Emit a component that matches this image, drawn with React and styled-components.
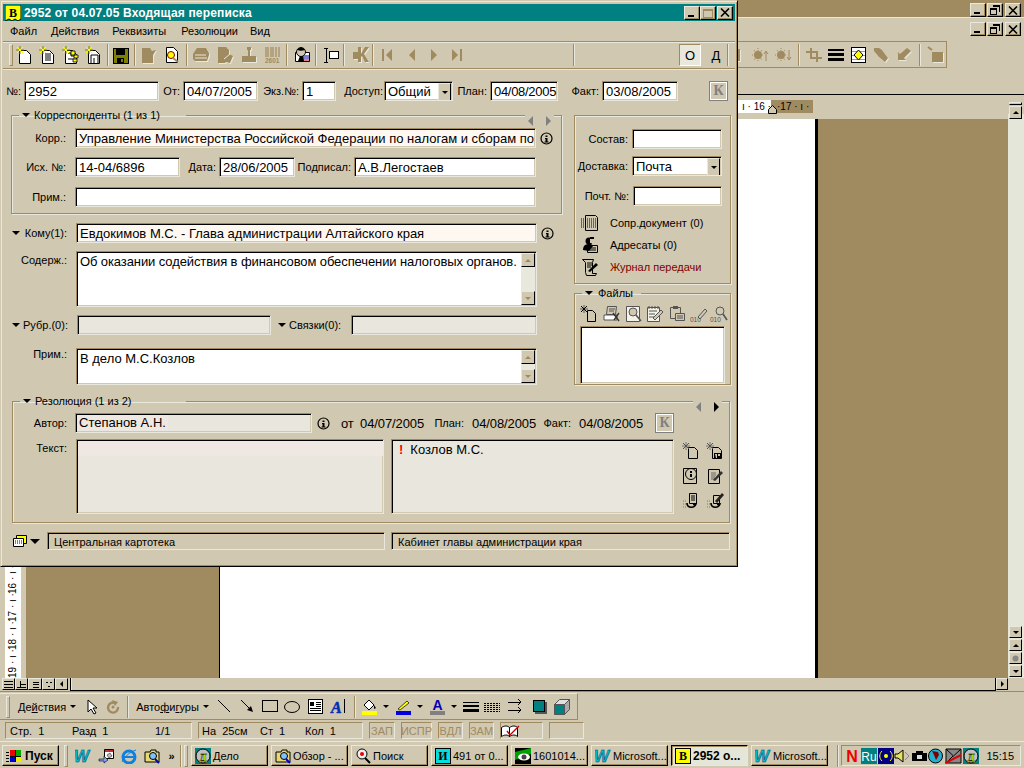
import React from 'react';
import styled, { createGlobalStyle } from 'styled-components';

const bg = '#d0c8b0';
const tan = '#a08a60';
const lite = '#e8e8dc';
const sans = '"Liberation Sans", Arial, sans-serif';

const Global = createGlobalStyle`
  html, body { margin: 0; padding: 0; background: ${bg}; }
  body { font: 11px ${sans}; color: #000; overflow: hidden; }
  * { box-sizing: border-box; }
  svg { display: block; flex: none; }
`;

const Desktop = styled.div`
  position: relative;
  width: 1024px;
  height: 768px;
  display: flex;
  flex-direction: column;
  overflow: hidden;
  background: ${bg};
`;

/* ---------- classic raised / sunken bits ---------- */
const WinBtn = styled.div`
  width: 16px;
  height: 14px;
  background: ${bg};
  border: 1px solid;
  border-color: ${lite} #000 #000 ${lite};
  box-shadow: inset -1px -1px 0 ${tan};
  display: flex;
  align-items: center;
  justify-content: center;
  margin-left: ${(p) => p.$ml || 0}px;
`;

const Raised = styled.div`
  width: ${(p) => p.$w || 13}px;
  height: ${(p) => p.$h || 12}px;
  background: ${bg};
  flex: none;
  border: 1px solid;
  border-color: ${lite} #000 #000 ${lite};
  display: flex;
  align-items: center;
  justify-content: center;
`;

const Tri = styled.i`
  display: block;
  flex: none;
  width: 0;
  height: 0;
  margin-left: ${(p) => p.$ml || 0}px;
  margin-right: ${(p) => p.$mr || 0}px;
  border-style: solid;
  border-color: transparent;
  ${(p) => {
    const s = p.$s || 4;
    const c = p.$c || '#000';
    if (p.$dir === 'left') return `border-width:${s}px ${s}px ${s}px 0;border-right-color:${c};`;
    if (p.$dir === 'right') return `border-width:${s}px 0 ${s}px ${s}px;border-left-color:${c};`;
    if (p.$dir === 'up') return `border-width:0 ${s}px ${s}px ${s}px;border-bottom-color:${c};`;
    return `border-width:${s}px ${s}px 0 ${s}px;border-top-color:${c};`;
  }}
`;

const Svg = ({ w = 18, h = 18, crisp, children }) => (
  <svg width={w} height={h} viewBox={`0 0 ${w} ${h}`} shapeRendering={crisp ? 'crispEdges' : 'auto'}>
    {children}
  </svg>
);

/* ---------- icons ---------- */
const Spark = ({ c = '#ffff00', k = '#808000' }) => (
  <g strokeWidth="1">
    <path d="M4 0v8M0 4h8" stroke={k} />
    <path d="M1 1l6 6M7 1l-6 6" stroke={c} />
  </g>
);
const Sheet = ({ x = 3, y = 4 }) => (
  <path d={`M${x + .5} ${y + .5}h7l4 4v9h-11z`} fill="#fff" stroke="#000" />
);
const Dis = ({ d }) => (
  <g>
    <path d={d} fill={lite} transform="translate(1 1)" />
    <path d={d} fill={tan} />
  </g>
);

const INew = () => <Svg><Sheet /><Spark /></Svg>;
const INewText = () => (
  <Svg><Sheet /><path d="M6 8h6M6 10h6M6 12h6M6 14h6" stroke="#000" /><Spark /></Svg>
);
const INewTree = () => (
  <Svg>
    <Sheet />
    <path d="M6 7h3v3M9 10h3M6 13h6" stroke="#000" fill="none" />
    <path d="M9 5h4v4h-4zM12 9h4v3h-4zM11 13h4v3h-4z" fill="#ffff00" stroke="#000" strokeWidth=".8" />
    <Spark />
  </Svg>
);
const INewN = () => (
  <Svg><Sheet /><path d="M6 9h7v8M6 9v8M9 12v5" stroke="#000" fill="none" /><Spark /></Svg>
);
const ISave = () => (
  <Svg crisp>
    <path d="M1 2h15v15h-15z" fill="#808000" stroke="#000" />
    <path d="M4 3h9v6h-9z" fill="#000" />
    <path d="M5 12h7v5h-7z" fill="#000" />
    <path d="M9 13h2v3h-2z" fill="#808000" />
  </Svg>
);
const IDisNote = () => <Svg><Dis d="M2 2h8l2 3 4-1-3 5v8h-11z" /></Svg>;
const IFind = () => (
  <Svg>
    <path d="M3.5 1.5h7l4 4v11h-11z" fill="#fff" stroke="#000" />
    <circle cx="8" cy="9" r="3.5" fill="#ffff00" stroke="#800000" />
    <path d="M10 12l5 4" stroke="#a08a60" strokeWidth="2" />
  </Svg>
);
const IPrint = () => (
  <Svg>
    <Dis d="M5 2h9l3 5v2l-2 6h-12l-2-2v-5z" />
    <path d="M3 9h11M3 12h12" stroke={lite} />
  </Svg>
);
const IDisEdit = () => (
  <Svg><Dis d="M2 1h8l3 3v4l4 2-3 7-4-1-1 1h-7z" /><path d="M8 13l6-5" stroke={lite} /></Svg>
);
const IStamp = () => <Svg crisp><Dis d="M7 1h4v3h-1v6h6v6h-14v-6h6v-6h-1z" /></Svg>;
const IBars = () => (
  <Svg w={18} h={18}>
    <path d="M2 1v10M4 1v10M7 1v10M9 1v10M12 1v10M15 1v10" stroke={tan} strokeWidth="1.2" />
    <text x="1" y="17" fontFamily={sans} fontSize="6.5" fontWeight="700" fill={tan}>2601</text>
  </Svg>
);
const IPerson = () => (
  <Svg>
    <path d="M2.5 6.5h14v9h-14z" fill="#fff" stroke="#000" />
    <path d="M10 10h6M10 12h6" stroke="#00a" />
    <path d="M10 14h6" stroke="#c00" />
    <circle cx="8" cy="6" r="4.5" fill="#d0c8b0" stroke="#000" />
    <path d="M4 4c2-3 6-3 8 0-3 1-5 1-8 0zM5 15l2-5h3l1 5z" fill="#000" />
  </Svg>
);
const IBeam = () => (
  <Svg crisp>
    <path d="M4 2v14M2 2h4M2 16h4" stroke="#000" fill="none" />
    <path d="M7.5 5.5h9v7h-9z" fill="#fff" stroke="#000" />
  </Svg>
);
const IDisK = () => (
  <Svg><Dis d="M7 1h3v7l4-7h4l-5 7 5 8h-4l-3-6-1 1v5h-3v-3h-5v-7h5z" /></Svg>
);
const IInfo = () => (
  <Svg w={13} h={13}>
    <circle cx="6.5" cy="6.5" r="5.5" fill="none" stroke="#000" strokeWidth="1.2" />
    <path d="M5.5 3.5h2v1.5h-2zM5 6h2.5v3.5h1v1h-4v-1h1v-2.5h-.5z" fill="#000" />
  </Svg>
);
const ILogoB = ({ s = 16 }) => (
  <Svg w={s} h={s}>
    <path d={`M0 0H${s}V${s - 2}L${s - 3} ${s}L${s - 6} ${s - 2}L${s - 9} ${s}L${s - 12} ${s - 2}L0 ${s}z`} fill="#ffff00" stroke="#000" />
    <text x={s / 2} y={s - 4} textAnchor="middle" fontFamily='"Liberation Serif", serif' fontWeight="700" fontSize={s - 4} fill="#000">В</text>
  </Svg>
);

const IDocList = () => (
  <Svg>
    <path d="M4.5 1.5h10l2 2v13h-12z" fill={bg} stroke="#000" />
    <path d="M6 5h9M6 7h9M6 9h9M6 11h9M6 13h9M0 5h3M0 7h3M0 9h3M0 11h3M0 13h3" stroke="#000" strokeDasharray="1 1" />
  </Svg>
);
const IPeople = () => (
  <Svg>
    <path d="M6.5 9.5h10v7h-10z" fill={bg} stroke="#000" />
    <path d="M8 12h7M8 14h7" stroke="#000" />
    <circle cx="8" cy="5" r="3.5" fill="#000" />
    <path d="M2 14c0-4 2-6 6-6s4 2 4 2l-4 5z" fill="#000" />
    <path d="M9 2h4v5h-4z" fill={bg} />
    <path d="M9 1h4v2h-4z" fill="#000" />
  </Svg>
);
const IScroll = () => (
  <Svg>
    <path d="M1.5 1.5h11l-1 3v11h4l-1 2h-9l-1-3v-10z" fill={bg} stroke="#000" />
    <path d="M6 5h5M6 7h5M6 9h4" stroke="#000" />
    <path d="M7 13l8-8 2 2-8 7z" fill="#000" />
  </Svg>
);
const IFNew = () => (
  <Svg>
    <path d="M7.5 5.5h5l3 3v8h-8z" fill={bg} stroke="#000" />
    <Spark c="#000" k="#555" />
  </Svg>
);
const IFPrint = () => (
  <Svg>
    <path d="M4.5 1.5h9l-1 8h-9z" fill={bg} stroke="#555" />
    <path d="M6 4h6M6 6h5" stroke="#555" />
    <path d="M1 10h13v5h-13z" fill="#fff" stroke="#555" />
    <path d="M10 8l6 8M16 8l-5 7" stroke="#333" strokeWidth="1.3" />
  </Svg>
);
const IFView = () => (
  <Svg>
    <path d="M1.5 1.5h13v15h-13z" fill="#f4f2e8" stroke="#555" />
    <circle cx="8" cy="7" r="4" fill={bg} stroke="#555" />
    <path d="M11 10l5 6" stroke="#555" strokeWidth="1.6" />
  </Svg>
);
const IFEdit = () => (
  <Svg>
    <path d="M1.5 2.5h12v14h-12z" fill="#f4f2e8" stroke="#555" />
    <path d="M3 6h8M3 9h6M3 12h5M3 1v3M6 1v3M9 1v3M12 1v3" stroke="#555" />
    <path d="M7 13l8-8 2 2-8 8z" fill={bg} stroke="#555" />
  </Svg>
);
const IFClip = () => (
  <Svg>
    <path d="M2.5 2.5h10v11h-10z" fill={bg} stroke="#555" />
    <path d="M5 1h5v3h-5z" fill="#555" />
    <path d="M7.5 8.5h9v7h-9z" fill={bg} stroke="#555" />
    <path d="M9 11h6M9 13h6" stroke="#555" />
  </Svg>
);
const IFBinEdit = () => (
  <Svg>
    <text x="0" y="17" fontFamily={sans} fontSize="6.5" fill="#555">010</text>
    <path d="M8 12l7-8 2 2-7 8z" fill={bg} stroke="#555" />
  </Svg>
);
const IFBinView = () => (
  <Svg>
    <text x="0" y="17" fontFamily={sans} fontSize="6.5" fill="#555">010</text>
    <circle cx="10" cy="6" r="4" fill={bg} stroke="#555" />
    <path d="M13 9l4 6" stroke="#555" strokeWidth="1.6" />
  </Svg>
);
const IRNew = () => (
  <Svg>
    <path d="M6.5 5.5h6l3 3v8h-9z" fill={bg} stroke="#000" />
    <Spark c="#555" k="#777" />
  </Svg>
);
const IRNewPr = () => (
  <Svg>
    <path d="M6.5 5.5h6l3 3v8h-9z" fill={bg} stroke="#000" />
    <path d="M8 11h7v5h-7z" fill="#000" />
    <path d="M9 12h2v4h-1zM12 12h2v2h-2z" fill={bg} />
    <Spark c="#555" k="#777" />
  </Svg>
);
const IRInfo = () => (
  <Svg>
    <path d="M1.5 1.5h13v15h-13z" fill={bg} stroke="#000" />
    <circle cx="9" cy="7" r="5.5" fill={bg} stroke="#000" />
    <path d="M8 4h2v2h-2zM8 7h2v3h-2z" fill="#000" />
  </Svg>
);
const IREdit = () => (
  <Svg>
    <path d="M2.5 2.5h11v14h-11z" fill={bg} stroke="#000" />
    <path d="M5 6h5M5 8h5M5 10h4M5 12h4" stroke="#666" />
    <path d="M7 13l8-9 2 2-8 8z" fill="#333" />
  </Svg>
);
const IRSend = () => (
  <Svg>
    <path d="M7.5 1.5h7v10h-7z" fill={bg} stroke="#000" />
    <path d="M9 4h4M9 6h4M9 8h4" stroke="#000" />
    <path d="M1 9h3M1 12h3M1 15h3" stroke="#777" strokeDasharray="1 1" />
    <path d="M5 11c0 5 7 6 9 1l-3 .5" fill="none" stroke="#000" strokeWidth="1.6" />
  </Svg>
);
const IRSendEdit = () => (
  <Svg>
    <path d="M7.5 3.5h6v8h-6z" fill={bg} stroke="#000" />
    <path d="M9 9l7-8 2 2-7 8z" fill="#222" />
    <path d="M1 9h3M1 12h3M1 15h3" stroke="#777" strokeDasharray="1 1" />
    <path d="M5 11c0 5 7 6 9 1l-3 .5" fill="none" stroke="#000" strokeWidth="1.6" />
  </Svg>
);
const ICards = () => (
  <Svg w={14} h={14}>
    <path d="M3.5 1.5h10v8h-10z" fill="#ffff00" stroke="#000" />
    <path d="M.5 4.5h10v8h-10z" fill="#fff" stroke="#000" />
    <path d="M2 7h7M2 9h7" stroke="#000" strokeDasharray="1 1" />
  </Svg>
);

/* ---------- dialog window ---------- */
const Dialog = styled.div`
  position: absolute;
  left: 0;
  top: 0;
  width: 738px;
  height: 567px;
  background: ${bg};
  border: 1px solid;
  border-color: ${bg} #000 #000 ${bg};
  box-shadow: inset 1px 1px 0 ${lite}, inset -1px -1px 0 ${tan};
  padding: 3px 2px 0;
  display: flex;
  flex-direction: column;
`;

const TitleBar = styled.div`
  height: 17px;
  background: #008080;
  display: flex;
  align-items: center;
  padding: 0 2px 0 2px;
  flex: none;
`;

const TitleText = styled.span`
  color: #fff;
  font-weight: 700;
  font-size: 12px;
  letter-spacing: 0.16px;
  margin-left: 3px;
  white-space: nowrap;
`;

const TitleBtns = styled.div`
  margin-left: auto;
  display: flex;
`;

const Menu = styled.div`
  height: 20px;
  display: flex;
  align-items: center;
  flex: none;
  padding-left: ${(p) => p.$pl || 7}px;
`;

const MenuItem = styled.span`
  font-size: 11px;
  margin-right: ${(p) => p.$mr}px;
  white-space: nowrap;
`;

const Toolbar = styled.div`
  height: 28px;
  flex: none;
  display: flex;
  align-items: center;
  border-top: 1px solid ${tan};
  border-bottom: 1px solid ${tan};
  box-shadow: inset 0 1px 0 ${lite}, 0 1px 0 ${lite};
  padding: 0 6px 0 6px;
`;

const Handle = styled.div`
  width: 4px;
  height: 22px;
  flex: none;
  margin-right: ${(p) => p.$mr ?? 2}px;
  border: 1px solid;
  border-color: ${lite} ${tan} ${tan} ${lite};
`;

const Slot = styled.div`
  width: ${(p) => p.$w || 23}px;
  height: 20px;
  flex: none;
  display: flex;
  align-items: center;
  justify-content: center;
`;

const Sep = styled.div`
  width: 2px;
  height: 22px;
  flex: none;
  border-left: 1px solid ${tan};
  border-right: 1px solid ${lite};
  margin-left: ${(p) => p.$ml ?? 2}px;
  margin-right: ${(p) => p.$mr ?? 1}px;
`;

const Spacer = styled.div`
  flex: 1;
`;

const Toggle = styled.div`
  width: 22px;
  height: 22px;
  flex: none;
  font: 13px ${sans};
  display: flex;
  align-items: center;
  justify-content: center;
  margin-left: ${(p) => p.$ml || 0}px;
  ${(p) => p.$on && `
    background: ${lite};
    border: 1px solid;
    border-color: ${tan} #fff #fff ${tan};
  `}
`;

const Body = styled.div`
  flex: 1;
  display: flex;
  flex-direction: column;
  padding-top: 12px;
  margin-left: -3px;
`;

const Row = styled.div`
  display: flex;
  align-items: ${(p) => p.$align || 'center'};
  flex: none;
  margin-top: ${(p) => p.$mt || 0}px;
  padding-left: ${(p) => p.$pl || 0}px;
`;

const Label = styled.span`
  display: block;
  flex: none;
  width: ${(p) => (p.$w ? `${p.$w}px` : 'auto')};
  text-align: ${(p) => p.$ta || 'right'};
  margin-left: ${(p) => p.$ml || 0}px;
  margin-right: ${(p) => p.$mr ?? 3}px;
  padding-top: ${(p) => p.$pt || 0}px;
  font-size: 11px;
  white-space: nowrap;
  color: ${(p) => p.$c || '#000'};
`;

const Field = styled.div`
  width: ${(p) => p.$w}px;
  height: ${(p) => p.$h || 20}px;
  flex: none;
  margin-left: ${(p) => p.$ml || 0}px;
  background: ${(p) => p.$bg || '#fff'};
  border: 1px solid;
  border-color: ${tan} ${lite} ${lite} ${tan};
  box-shadow: inset 1px 1px 0 #000, inset -1px -1px 0 ${bg};
  padding: 2px 2px 2px 3px;
  font-size: ${(p) => p.$fs || 13}px;
  line-height: 15px;
  white-space: nowrap;
  overflow: hidden;
  letter-spacing: ${(p) => p.$ls || 0}px;
`;

const FieldFlex = styled(Field)`
  display: flex;
  padding-right: 1px;
`;

const FieldText = styled.div`
  flex: 1;
  overflow: hidden;
`;

const ScrollCol = styled.div`
  width: 14px;
  flex: none;
  display: flex;
  flex-direction: column;
  background: ${lite};
  justify-content: space-between;
  margin: -1px 0;
`;

const Tinted = styled.div`
  height: 15px;
  display: ${(p) => (p.$inline ? 'inline-block' : 'block')};
  margin: -1px -2px 0 -2px;
  padding: 0 2px;
  background: #efe8e2;
  overflow: hidden;
`;

const SelectBtn = styled(Raised)`
  margin: -1px 0;
`;

const Group = styled.fieldset`
  margin: ${(p) => p.$m || 0};
  min-width: 0;
  padding: ${(p) => p.$p || 0};
  width: ${(p) => p.$w}px;
  position: relative;
  border: 1px solid ${tan};
  box-shadow: 1px 1px 0 ${lite}, inset 1px 1px 0 ${lite};
`;

const Legend = styled.legend`
  display: flex;
  align-items: center;
  height: 14px;
  margin-left: ${(p) => p.$ml || 7}px;
  padding: 0 ${(p) => p.$pr || 4}px 0 3px;
  font-size: 11px;
  white-space: nowrap;
`;

const LegendNav = styled.div`
  position: absolute;
  top: -8px;
  right: 7px;
  height: 14px;
  display: flex;
  align-items: center;
  gap: 13px;
  padding: 0 3px;
  background: ${bg};
`;

const Columns = styled.div`
  display: flex;
  margin-top: 7px;
  padding-left: 11px;
  flex: none;
  height: 280px;
`;

const LeftCol = styled.div`
  width: 551px;
  flex: none;
`;

const RightCol = styled.div`
  width: 157px;
  flex: none;
  margin-left: 12px;
  padding-top: 7px;
`;

const Panel = styled.div`
  height: 169px;
  border: 1px solid ${tan};
  box-shadow: 1px 1px 0 ${lite}, inset 1px 1px 0 ${lite};
  padding-top: 13px;
`;

const LinkRow = styled.div`
  display: flex;
  align-items: center;
  height: 22px;
  margin-top: ${(p) => p.$mt || 0}px;
  padding-left: 6px;
  gap: 11px;
  font-size: 11px;
  color: ${(p) => p.$c || '#000'};
  white-space: nowrap;
`;

const FileTools = styled.div`
  display: flex;
  height: 18px;
  margin: 5px 0 3px 5px;
`;

const ToolCell = styled.div`
  width: ${(p) => p.$w || 22}px;
  flex: none;
`;

const KBtn = styled.div`
  width: 19px;
  height: 20px;
  flex: none;
  margin-left: ${(p) => p.$ml || 0}px;
  background: ${bg};
  border: 1px solid #808080;
  box-shadow: inset 1px 1px 0 #fff, inset -1px -1px 0 #fff;
  color: #808080;
  font: 700 14px "Liberation Serif", serif;
  display: flex;
  align-items: center;
  justify-content: center;
`;

const DateText = styled.span`
  display: block;
  flex: none;
  width: ${(p) => p.$w}px;
  margin-left: ${(p) => p.$ml || 0}px;
  font-size: 13px;
  letter-spacing: -0.1px;
  white-space: nowrap;
`;

const ResGrid = styled.div`
  display: grid;
  height: 75px;
  grid-template-columns: 24px 24px;
  grid-auto-rows: 25px;
  padding-top: 3px;
  margin-left: 8px;
`;

const Bang = styled.span`
  color: #f00;
  font-weight: 700;
  margin: 0 7px 0 4px;
`;

/* ---------- word window behind ---------- */
const Word = styled.div`
  flex: 1;
  display: flex;
  flex-direction: column;
  min-height: 0;
`;

const WTitle = styled.div`
  height: 18px;
  flex: none;
  background: ${tan};
  border-bottom: 1px solid ${lite};
  display: flex;
  justify-content: flex-end;
  align-items: flex-start;
  padding: 3px 3px 0 0;
`;

const WMenu = styled.div`
  height: 23px;
  flex: none;
  display: flex;
  justify-content: flex-end;
  align-items: flex-start;
  padding: 4px 3px 0 0;
`;

const WTools = styled.div`
  width: 947px;
  height: 27px;
  flex: none;
  display: flex;
  align-items: center;
  justify-content: flex-end;
  border: 1px solid ${tan};
  border-left: none;
`;

const WGap = styled.div`
  height: 27px;
  flex: none;
  border-bottom: 1px solid #000;
`;

const WMain = styled.div`
  flex: 1;
  min-height: 0;
  display: flex;
`;

const WDocCol = styled.div`
  flex: 1;
  display: flex;
  flex-direction: column;
`;

const RulerRow = styled.div`
  height: 24px;
  flex: none;
  display: flex;
  padding: 5px 0 6px 738px;
  position: relative;
  font-size: 10px;
  line-height: 13px;
`;

const RulerPart = styled.div`
  width: ${(p) => p.$w}px;
  background: ${(p) => p.$bg};
  white-space: pre;
  padding-left: ${(p) => p.$pl || 0}px;
`;

const RulerMark = styled.div`
  position: absolute;
  left: 768px;
  top: 10px;
`;

const DocRow = styled.div`
  flex: 1;
  min-height: 0;
  display: flex;
`;

const VRulerZone = styled.div`
  width: 26px;
  flex: none;
  padding: 0 5px;
  display: flex;
`;

const VRuler = styled.div`
  flex: 1;
  background: #fff;
  display: flex;
  flex-direction: column;
  justify-content: flex-end;
  align-items: center;
`;

const VRulerNum = styled.div`
  height: 28px;
  writing-mode: vertical-rl;
  transform: rotate(180deg);
  font-size: 10px;
  line-height: 16px;
  white-space: pre;
`;

const TanFill = styled.div`
  background: ${tan};
  flex: ${(p) => (p.$w ? 'none' : 1)};
  width: ${(p) => (p.$w ? `${p.$w}px` : 'auto')};
`;

const Page = styled.div`
  width: 599px;
  flex: none;
  background: #fff;
  border-left: 1px solid #000;
  border-right: 3px solid #000;
`;

const VScroll = styled.div`
  width: 16px;
  flex: none;
  display: flex;
  flex-direction: column;
  align-items: center;
  padding: 7px 2px 1px 1px;
  gap: 1px;
  background: linear-gradient(${bg}, ${bg}) top / 100% 19px no-repeat, #e4e6da;
`;

const VScrollGap = styled.div`
  flex: 1;
`;

const HScroll = styled.div`
  height: 13px;
  flex: none;
  display: flex;
  padding-left: 2px;
  gap: 0;
`;

const HTrack = styled.div`
  flex: 1;
  margin-left: 2px;
  border-left: 1px solid #000;
  border-bottom: 1px solid #000;
  border-right: 1px solid #000;
  box-shadow: inset 1px 0 0 ${lite};
`;

const Corner = styled.div`
  width: 16px;
  flex: none;
`;

const DrawBar = styled.div`
  height: 27px;
  width: 578px;
  flex: none;
  margin-top: 1px;
  display: flex;
  align-items: center;
  border-top: 1px solid ${lite};
  border-right: 1px solid ${tan};
  border-bottom: 1px solid ${tan};
  padding-left: 6px;
  position: relative;
`;

const BarWrap = styled.div`
  flex: none;
  border-top: 1px solid ${tan};
`;

const DrawText = styled.span`
  display: flex;
  align-items: center;
  gap: 4px;
  font-size: 11px;
  margin-left: ${(p) => p.$ml || 0}px;
  margin-right: ${(p) => p.$mr || 0}px;
  white-space: nowrap;
`;

const Under = styled.u`
  text-underline-offset: 1px;
`;

const StatusBar = styled.div`
  height: 22px;
  flex: none;
  display: flex;
  align-items: center;
  padding-left: 5px;
  gap: 6px;
  border-bottom: 1px solid ${lite};
`;

const StatusCell = styled.div`
  width: ${(p) => p.$w}px;
  height: 17px;
  flex: none;
  display: flex;
  align-items: center;
  justify-content: ${(p) => (p.$center ? 'center' : 'flex-start')};
  border: 1px solid;
  border-color: ${tan} ${lite} ${lite} ${tan};
  font-size: 11px;
  color: ${(p) => (p.$off ? tan : '#000')};
  white-space: nowrap;
`;

const StatusItem = styled.span`
  width: ${(p) => p.$w}px;
  flex: none;
  padding-left: ${(p) => p.$pl || 0}px;
  white-space: pre;
`;

/* ---------- taskbar ---------- */
const Taskbar = styled.div`
  height: 26px;
  flex: none;
  display: flex;
  align-items: center;
  padding: 1px 0 0 2px;
`;

const Start = styled.div`
  width: 57px;
  height: 21px;
  flex: none;
  display: flex;
  align-items: center;
  gap: 3px;
  padding-left: 3px;
  font: 700 12px ${sans};
  border: 1px solid;
  border-color: ${lite} #000 #000 ${lite};
  box-shadow: inset -1px -1px 0 ${tan};
`;

const QuickBar = styled.div`
  display: flex;
  align-items: center;
  margin-left: 5px;
  height: 22px;
`;

const Quick = styled.div`
  width: ${(p) => p.$w || 23}px;
  flex: none;
  display: flex;
  justify-content: center;
  font-size: 11px;
  font-weight: 700;
`;

const Task = styled.div`
  width: 77px;
  height: 21px;
  flex: none;
  margin-right: 3px;
  display: flex;
  align-items: center;
  gap: 2px;
  padding-left: 3px;
  font-size: 11px;
  white-space: nowrap;
  border: 1px solid;
  border-color: ${lite} #000 #000 ${lite};
  box-shadow: inset -1px -1px 0 ${tan};
  ${(p) => p.$on && `
    background: #e4e6da;
    font-size: 12px;
    font-weight: 700;
    border-color: #000 ${lite} ${lite} #000;
    box-shadow: inset 1px 1px 0 ${tan};
  `}
`;

const Tray = styled.div`
  width: 180px;
  height: 21px;
  flex: none;
  margin-left: 1px;
  display: flex;
  align-items: center;
  padding-left: 3px;
  border: 1px solid;
  border-color: ${tan} ${lite} ${lite} ${tan};
`;

const Clock = styled.span`
  margin-left: auto;
  margin-right: 6px;
  font-size: 11px;
`;

const Min = () => <Svg w={8} h={8} crisp><path d="M0 6h6v2h-6z" fill="#000" /></Svg>;
const Restore = () => (
  <Svg w={10} h={10} crisp>
    <path d="M3 .5h6.5v6M.5 3.5h6v6h-6z" fill={bg} stroke="#000" />
    <path d="M3 1h7M0 4h7" stroke="#000" />
  </Svg>
);
const Max = ({ c = tan }) => (
  <Svg w={10} h={10} crisp><path d="M.5 1.5h9v8h-9zM0 2h10" fill="none" stroke={c} /></Svg>
);
const Close = () => (
  <Svg w={10} h={9}>
    <path d="M1 .5l8 8M9 .5l-8 8" stroke="#000" strokeWidth="1.6" />
  </Svg>
);

const WordW = ({ s = 16 }) => (
  <Svg w={s} h={s}>
    <text x="-1" y={s - 2} fontFamily={sans} fontWeight="700" fontStyle="italic" fontSize={s} fill="#00c0c0" stroke="#004080" strokeWidth=".5">W</text>
  </Svg>
);

const StartLogo = () => (
  <Svg w={16} h={14} crisp>
    <path d="M4 1h5v6h-5z" fill="#e00" />
    <path d="M9 1h6v6h-6z" fill="#0a0" />
    <path d="M4 7h5v6h-5z" fill="#00c" />
    <path d="M9 7h6v6h-6z" fill="#ee0" />
    <path d="M0 3h3M0 6h3M0 9h3M0 12h3" stroke="#000" />
    <path d="M9 1v12M4 7h11" stroke="#000" />
  </Svg>
);

const Delo = ({ s = 16 }) => (
  <Svg w={s} h={s}>
    <rect width={s} height={s} fill="#008080" />
    <circle cx={s / 2} cy={s / 2} r={s / 2 - 1} fill="#c0c0c0" stroke="#000" />
    <text x={s / 2} y={s - 3} textAnchor="middle" fontFamily='"Liberation Serif", serif' fontWeight="700" fontSize={s - 5} fill="#ffff00" stroke="#000" strokeWidth=".4">Д</text>
  </Svg>
);

const Explorer = () => (
  <Svg w={16} h={16}>
    <path d="M1 4h5l1-2h5v2h3v10h-14z" fill="#e8d870" stroke="#000" />
    <circle cx="9" cy="8" r="3.5" fill="#80c0ff" stroke="#000" />
    <path d="M11 11l4 4" stroke="#0000c0" strokeWidth="2" />
  </Svg>
);

const Search = () => (
  <Svg w={16} h={16}>
    <circle cx="7" cy="6" r="5" fill="#f0f0f0" stroke="#000" />
    <circle cx="7" cy="6" r="2" fill="#e00" />
    <path d="M10 10l5 5" stroke="#000" strokeWidth="2" />
  </Svg>
);

const LetterBox = ({ ch, c }) => (
  <Svg w={16} h={16}>
    <rect x=".5" y=".5" width="15" height="15" fill={c} stroke="#000" />
    <text x="8" y="12" textAnchor="middle" fontFamily='"Liberation Serif", serif' fontWeight="700" fontSize="12">{ch}</text>
  </Svg>
);

const Eye = () => (
  <Svg w={16} h={16}>
    <rect width="16" height="16" fill="#000" />
    <path d="M0 4l16-4v6l-16 6z" fill="#00a000" />
    <ellipse cx="9" cy="9" rx="6" ry="3.5" fill="#fff" />
    <circle cx="9" cy="9" r="2.5" fill="#444" />
  </Svg>
);

const IE = () => (
  <Svg w={16} h={16}>
    <ellipse cx="8" cy="9" rx="6" ry="6" fill="none" stroke="#1080e0" strokeWidth="3" />
    <path d="M3 9h10" stroke="#1080e0" strokeWidth="2" />
    <path d="M1 14c3-6 8-10 14-12" stroke="#1080e0" fill="none" />
  </Svg>
);

const Outlook = () => (
  <Svg w={16} h={16}>
    <path d="M6.5 1.5h9v9h-9z" fill="#fff" stroke="#000" />
    <path d="M7 2h8v2h-8z" fill="#c03030" />
    <path d="M9 7l3-2 2 3-3 2z" fill="#c0c0c0" stroke="#000" strokeWidth=".5" />
    <path d="M1 11h5v-3l4 4-4 3v-2h-5z" fill="#80a0f0" stroke="#000" strokeWidth=".6" />
  </Svg>
);

const Dots = ({ w = 14 }) => (
  <Svg w={w} h={14} crisp>
    <path d={`M0 3h${w}M0 5h${w}M0 7h${w}M0 9h${w}M0 11h${w}`} stroke="#000" strokeDasharray="2 1" />
  </Svg>
);

const FillSwatch = ({ c, children }) => (
  <Svg w={17} h={18}>
    {children}
    <path d="M1 13h15v4h-15z" fill={c} />
  </Svg>
);

const toolIcons = [INew, INewText, INewTree, INewN];

export default function App() {
  return (
    <Desktop>
      <Global />
      <Word>
        <WTitle>
          <WinBtn><Min /></WinBtn>
          <WinBtn $ml={1}><Restore /></WinBtn>
          <WinBtn $ml={2}><Close /></WinBtn>
        </WTitle>
        <WMenu>
          <WinBtn><Min /></WinBtn>
          <WinBtn $ml={1}><Restore /></WinBtn>
          <WinBtn $ml={2}><Close /></WinBtn>
        </WMenu>
        <WTools>
          <Slot $w={14}><Svg w={10} h={16}><Dis d="M0 2h4v12h-4z" /></Svg></Slot>
          <Slot $w={26}><Svg w={18} h={16}><circle cx="6" cy="8" r="4" fill={tan} /><path d="M6 1v14M0 8h12M2 3l8 10M10 3l-8 10" stroke={tan} strokeDasharray="1 1" /><path d="M14 14v-9M12 7l2-3 2 3" stroke={tan} fill="none" /></Svg></Slot>
          <Slot $w={20}><Svg w={18} h={16}><circle cx="6" cy="8" r="4" fill={tan} /><path d="M6 1v14M0 8h12M2 3l8 10M10 3l-8 10" stroke={tan} strokeDasharray="1 1" /><path d="M14 3v9M12 10l2 3 2-3" stroke={tan} fill="none" /></Svg></Slot>
          <Sep $ml={4} $mr={4} />
          <Slot $w={20}><Svg w={16} h={16} crisp><path d="M5 1v10h11M0 5h11v10" stroke={tan} strokeWidth="2" fill="none" /></Svg></Slot>
          <Slot $w={23}><Svg w={16} h={12} crisp><path d="M0 0h16v2h-16zM0 4h16v3h-16zM0 9h16v3h-16z" fill="#000" /></Svg></Slot>
          <Slot $w={22}><Svg w={15} h={16} crisp><path d="M.5 .5h14v15h-14z" fill="#fff" stroke="#000" /><path d="M1 4h13M1 8h13M1 12h13" stroke="#999" /><path d="M7.5 3l4.5 5-4.5 5-4.5-5z" fill="#ffff00" stroke="#000" shapeRendering="auto" /></Svg></Slot>
          <Slot $w={24}><Svg w={18} h={16}><Dis d="M2 1h5l3 2 6 8-3 4-6-5-5-6z" /></Svg></Slot>
          <Slot $w={24}><Svg w={16} h={16}><Dis d="M10 1l4 3-7 7 2 2h-8v-8l2 2z" /></Svg></Slot>
          <Sep $ml={2} $mr={3} />
          <Slot $w={22}><Svg w={17} h={17}><path d="M1 1l4 3" stroke={tan} strokeWidth="2" /><Dis d="M5 6l11 0 0 10-11 0z" /></Svg></Slot>
        </WTools>
        <WGap />
        <WMain>
          <WDocCol>
            <RulerRow>
              <RulerPart $w={33} $bg="#fff" $pl={4}>{'ı · 16 ·'}</RulerPart>
              <RulerPart $w={42} $bg={tan} $pl={6}>{'·17 · ı ·'}</RulerPart>
              <RulerMark>
                <Svg w={9} h={9}><path d="M4.5 .5l4 4v4h-8v-4z" fill={bg} stroke="#000" /></Svg>
              </RulerMark>
            </RulerRow>
            <DocRow>
              <VRulerZone>
                <VRuler>
                  <VRulerNum>{'16 · ı ·'}</VRulerNum>
                  <VRulerNum>{'17 · ı ·'}</VRulerNum>
                  <VRulerNum>{'18 · ı ·'}</VRulerNum>
                  <VRulerNum>{'19 · ı ·'}</VRulerNum>
                </VRuler>
              </VRulerZone>
              <TanFill $w={193} />
              <Page />
              <TanFill />
            </DocRow>
          </WDocCol>
          <VScroll>
            <Raised $w={13} $h={3} />
            <Raised $w={13} $h={13}><Tri $dir="up" $s={3} /></Raised>
            <VScrollGap />
            <Raised $w={13} $h={12}><Tri $dir="down" $s={3} /></Raised>
            <Raised $w={13} $h={12}><Tri $dir="up" $s={3} /></Raised>
            <Raised $w={13} $h={12}><Svg w={7} h={7}><circle cx="3.5" cy="3.5" r="3" fill="#888" /></Svg></Raised>
            <Raised $w={13} $h={12}><Tri $dir="down" $s={3} /></Raised>
          </VScroll>
        </WMain>
        <HScroll>
          <Raised><Svg w={9} h={7} crisp><path d="M0 0h9M0 3h9M0 6h9" stroke="#000" /></Svg></Raised>
          <Raised><Svg w={9} h={7} crisp><path d="M3 0v7M3 3h6M0 6h9" stroke="#000" /></Svg></Raised>
          <Raised $w={14}><Svg w={8} h={7} crisp><path d="M2 1h6M2 3h6M2 6h6" stroke="#000" /></Svg></Raised>
          <Raised><Svg w={8} h={7} crisp><path d="M1 1h2M5 1h2M3 5h2" stroke="#000" /></Svg></Raised>
          <Raised><Tri $dir="left" $s={3} /></Raised>
          <HTrack />
          <Raised $w={12}><Tri $dir="right" $s={3} /></Raised>
          <Corner />
        </HScroll>
        <BarWrap>
          <DrawBar>
            <Handle $mr={8} />
            <DrawText $mr={8}><span>Де<Under>й</Under>ствия</span><Tri $dir="down" $s={3} /></DrawText>
            <Slot $w={17}><Svg w={12} h={16}><path d="M1 1v12l3-3 3 5 2-1-3-5h4z" fill="#fff" stroke="#000" /></Svg></Slot>
            <Slot $w={24}><Svg w={16} h={16}><path d="M13 8a5 5 0 1 1-3-4" fill="none" stroke={tan} strokeWidth="2.4" /><path d="M7 1l6 2-3 4z" fill={tan} /><circle cx="8" cy="8" r="1.5" fill={tan} /></Svg></Slot>
            <Sep $ml={2} $mr={6} />
            <DrawText $ml={1} $mr={5}><span>Авто<Under>ф</Under>и<Under>г</Under>уры</span><Tri $dir="down" $s={3} /></DrawText>
            <Slot $w={22}><Svg w={15} h={15}><path d="M1 1l12 12" stroke="#000" /></Svg></Slot>
            <Slot $w={23}><Svg w={15} h={15}><path d="M1 1l9 9" stroke="#000" /><path d="M13 13l-6-2 4-4z" fill="#000" /></Svg></Slot>
            <Slot $w={22}><Svg w={16} h={13} crisp><path d="M.5 .5h15v11h-15z" fill={bg} stroke="#000" /></Svg></Slot>
            <Slot $w={23}><Svg w={16} h={12}><ellipse cx="8" cy="6" rx="7.5" ry="5.5" fill={bg} stroke="#000" /></Svg></Slot>
            <Slot $w={23}><Svg w={16} h={16} crisp><path d="M1.5 .5h14v14h-14z" fill="#fff" stroke="#000" /><path d="M3 3h4v4h-4z" fill="#000" /><path d="M9 3h5M9 5h5M9 7h5M3 9h11M3 11h11" stroke="#000" /></Svg></Slot>
            <Slot $w={23}><Svg w={16} h={18}><text x="1" y="15" fontFamily='"Liberation Serif", serif' fontWeight="700" fontStyle="italic" fontSize="16" fill="#0030b0" stroke="#0030b0" strokeWidth=".5">A</text><path d="M14.5 1v14" stroke="#000" /></Svg></Slot>
            <Sep $ml={4} $mr={5} />
            <Slot $w={18}><FillSwatch c="#ffff00"><path d="M3 7l5-5 5 5-5 5z" fill="#fff" stroke="#000" /><path d="M13 7l2 3-2 1z" fill="#000" /></FillSwatch></Slot>
            <Tri $dir="down" $s={3} $ml={4} $mr={6} />
            <Slot $w={18}><FillSwatch c="#0000e0"><path d="M3 11l9-8 2 2-9 7z" fill="#ffff00" stroke="#000" strokeWidth=".7" /></FillSwatch></Slot>
            <Tri $dir="down" $s={3} $ml={4} $mr={6} />
            <Slot $w={18}><FillSwatch c="#808080"><text x="8.5" y="12" textAnchor="middle" fontFamily={sans} fontWeight="700" fontSize="14" fill="#0000b0">A</text></FillSwatch></Slot>
            <Tri $dir="down" $s={3} $ml={4} $mr={4} />
            <Slot $w={20}><Svg w={16} h={10} crisp><path d="M0 0h16v1h-16zM0 3h16v2h-16zM0 7h16v3h-16z" fill="#000" /></Svg></Slot>
            <Slot $w={23}><Dots w={16} /></Slot>
            <Slot $w={25}><Svg w={16} h={15} crisp><path d="M0 3h13M10 0l3 3-3 3M0 11h13M10 8l3 3-3 3" stroke="#000" fill="none" /></Svg></Slot>
            <Slot $w={22}><Svg w={14} h={14} crisp><path d="M2 2h12v12h-12z" fill="#555" /><path d="M.5 .5h11v11h-11z" fill="#008080" stroke="#000" /></Svg></Slot>
            <Slot $w={22}><Svg w={16} h={16}><path d="M.5 5.5h10v10h-10z" fill="#008080" stroke="#555" /><path d="M.5 5.5l5-5h10l-5 5z" fill="#e0e0e0" stroke="#555" /><path d="M10.5 5.5l5-5v10l-5 5z" fill="#aaa" stroke="#555" /></Svg></Slot>
          </DrawBar>
        </BarWrap>
        <StatusBar>
          <StatusCell $w={187}>
            <StatusItem $w={66} $pl={4}>{'Стр.  1'}</StatusItem>
            <StatusItem $w={83}>{'Разд  1'}</StatusItem>
            <StatusItem $w={30}>1/1</StatusItem>
          </StatusCell>
          <StatusCell $w={165}>
            <StatusItem $w={61} $pl={3}>{'На  25см'}</StatusItem>
            <StatusItem $w={45}>{'Ст  1'}</StatusItem>
            <StatusItem $w={50}>{'Кол  1'}</StatusItem>
          </StatusCell>
          <StatusCell $w={26} $off $center>ЗАП</StatusCell>
          <StatusCell $w={31} $off $center>ИСПР</StatusCell>
          <StatusCell $w={25} $off $center>ВДЛ</StatusCell>
          <StatusCell $w={25} $off $center>ЗАМ</StatusCell>
          <StatusCell $w={43}>
            <Svg w={20} h={14}><path d="M.5 3.5c3-2 6-2 8 0v9c-2-2-5-2-8 0zM8.5 3.5c3-2 6-2 8 0v9c-2-2-5-2-8 0z" fill="#fff" stroke="#000" /><path d="M6 7l3 4 9-9" stroke="#c00000" strokeWidth="1.4" fill="none" /></Svg>
          </StatusCell>
          <StatusCell $w={35} />
        </StatusBar>
      </Word>

      <Taskbar>
        <Start><StartLogo />Пуск</Start>
        <QuickBar>
          <Handle $mr={3} />
          <Quick><WordW /></Quick>
          <Quick><Outlook /></Quick>
          <Quick><IE /></Quick>
          <Quick><Explorer /></Quick>
          <Quick $w={17}>»</Quick>
          <Sep $ml={0} $mr={2} />
          <Handle $mr={3} />
        </QuickBar>
        <Task><Delo />Дело</Task>
        <Task><Explorer />Обзор - ...</Task>
        <Task><Search />Поиск</Task>
        <Task><LetterBox ch="И" c="#00e0e0" />491 от 0...</Task>
        <Task><Eye />1601014...</Task>
        <Task><WordW />Microsoft...</Task>
        <Task $on><LetterBox ch="В" c="#ffff00" />2952 о...</Task>
        <Task><WordW />Microsoft...</Task>
        <Sep $ml={6} $mr={1} />
        <Tray>
          <Svg w={15} h={17}><text x="7" y="15" textAnchor="middle" fontFamily={sans} fontWeight="700" fontSize="16" fill="#f00000">N</text></Svg>
          <Svg w={18} h={16}><rect x="1" width="16" height="16" fill="#008080" /><text x="9" y="13" textAnchor="middle" fontFamily={sans} fontSize="12" fill="#fff">Ru</text></Svg>
          <Svg w={16} h={16}><rect width="16" height="16" fill="#000080" /><circle cx="8" cy="8" r="2" fill="#ffff00" /><path d="M4 3c-3 3-3 7 0 10M12 3c3 3 3 7 0 10" stroke="#ffff00" fill="none" /></Svg>
          <Svg w={17} h={16}><path d="M1 6h3l5-4v12l-5-4h-3z" fill="#e8e060" stroke="#000" /><path d="M11 4l4 4-4 4" stroke="#888" fill="none" /></Svg>
          <Svg w={17} h={16} crisp><path d="M1 5h15v8h-15z" fill="#000" /><path d="M5 3h7v2h-7z" fill="#000" /><path d="M6 7h5v4h-5z" fill="#ddd" /></Svg>
          <Svg w={17} h={16}><circle cx="7.5" cy="8" r="7" fill="#20b0d0" stroke="#000" /><path d="M4 3l6 1 1 3-3 5-2-5z" fill="#800000" /></Svg>
          <Svg w={18} h={16}><path d="M1 1h15v14h-15z" fill="#888" stroke="#000" /><path d="M1 1l7.5 7 7.5-7M1 15l7-7" stroke="#000" fill="none" /><path d="M0 15l16-8" stroke="#e00000" strokeWidth="2" /></Svg>
          <Delo />
          <Clock>15:15</Clock>
        </Tray>
      </Taskbar>

      <Dialog>
        <TitleBar>
          <ILogoB />
          <TitleText>2952 от 04.07.05 Входящая переписка</TitleText>
          <TitleBtns>
            <WinBtn><Min /></WinBtn>
            <WinBtn><Max /></WinBtn>
            <WinBtn $ml={1}><Close /></WinBtn>
          </TitleBtns>
        </TitleBar>
        <Menu>
          <MenuItem $mr={14}>Файл</MenuItem>
          <MenuItem $mr={13}>Действия</MenuItem>
          <MenuItem $mr={15}>Реквизиты</MenuItem>
          <MenuItem $mr={12}>Резолюции</MenuItem>
          <MenuItem $mr={0}>Вид</MenuItem>
        </Menu>
        <Toolbar>
          <Handle $mr={0} />
          {toolIcons.map((Ico, i) => <Slot key={i}><Ico /></Slot>)}
          <Sep />
          <Slot $w={22}><ISave /></Slot>
          <Sep />
          <Slot><IDisNote /></Slot>
          <Slot><IFind /></Slot>
          <Sep $ml={3} />
          <Slot $w={24}><IPrint /></Slot>
          <Slot $w={24}><IDisEdit /></Slot>
          <Slot $w={24}><IStamp /></Slot>
          <Slot $w={24}><IBars /></Slot>
          <Sep $ml={1} $mr={2} />
          <Slot><IPerson /></Slot>
          <Sep $mr={3} />
          <Slot $w={22}><IBeam /></Slot>
          <Sep $ml={1} $mr={4} />
          <Slot $w={21}><IDisK /></Slot>
          <Sep $ml={2} $mr={2} />
          <Slot $w={24}>
            <Svg w={12} h={12} crisp><path d="M0 0h2v12h-2z" fill={tan} /><path d="M10 0v12l-6-6z" fill={tan} shapeRendering="auto" /></Svg>
          </Slot>
          <Slot $w={24}><Tri $dir="left" $s={6} $c={tan} /></Slot>
          <Slot $w={20}><Tri $dir="right" $s={6} $c={tan} /></Slot>
          <Slot $w={24}>
            <Svg w={12} h={12} crisp><path d="M10 0h2v12h-2z" fill={tan} /><path d="M2 0v12l6-6z" fill={tan} shapeRendering="auto" /></Svg>
          </Slot>
          <Sep $ml={105} />
          <Spacer />
          <Toggle $on>О</Toggle>
          <Toggle $ml={4}>Д</Toggle>
          <Sep $ml={0} $mr={0} />
        </Toolbar>

        <Body>
          <Row $pl={6}>
            <Label $w={15}>№:</Label>
            <Field $w={135}>2952</Field>
            <Label $w={21}>От:</Label>
            <Field $w={75}>04/07/2005</Field>
            <Label $w={41}>Экз.№:</Label>
            <Field $w={34}>1</Field>
            <Label $w={47} $mr={1}>Доступ:</Label>
            <FieldFlex $w={69}>
              <FieldText>Общий</FieldText>
              <SelectBtn $w={13} $h={18}><Tri $dir="down" $s={3} /></SelectBtn>
            </FieldFlex>
            <Label $w={34}>План:</Label>
            <Field $w={68} $ls={-0.3}>04/08/2005</Field>
            <Label $w={41}>Факт:</Label>
            <Field $w={76}>03/08/2005</Field>
            <KBtn $ml={31}>К</KBtn>
          </Row>

          <Columns>
            <LeftCol>
              <Group $p="6px 0 6px" $w={551}>
                <Legend $pr={26}><Tri $s={4} $mr={4} />Корреспонденты (1 из 1)</Legend>
                <LegendNav>
                  <Tri $dir="left" $s={5} $c="#808080" />
                  <Tri $dir="right" $s={5} $c="#808080" />
                </LegendNav>
                <Row>
                  <Label $w={54} $mr={9}>Корр.:</Label>
                  <Field $w={461} $bg="#fff8f0">Управление Министерства Российской Федерации по налогам и сборам по</Field>
                  <Slot $w={20}><IInfo /></Slot>
                </Row>
                <Row $mt={9}>
                  <Label $w={54} $mr={9}>Исх. №:</Label>
                  <Field $w={105}>14-04/6896</Field>
                  <Label $w={36}>Дата:</Label>
                  <Field $w={76}>28/06/2005</Field>
                  <Label $w={56}>Подписал:</Label>
                  <Field $w={182}>А.В.Легостаев</Field>
                </Row>
                <Row $mt={10}>
                  <Label $w={54} $mr={9}>Прим.:</Label>
                  <Field $w={461} />
                </Row>
              </Group>
              <Row $mt={9} $pl={1}>
                <Tri $s={4} $mr={3} />
                <Label $w={44} $mr={9}>Кому(1):</Label>
                <Field $w={461} $bg="#fff8f0">Евдокимов М.С. - Глава администрации Алтайского края</Field>
                <Slot $w={20}><IInfo /></Slot>
              </Row>
              <Row $mt={8} $pl={1} $align="flex-start">
                <Label $w={55} $mr={9} $pt={3}>Содерж.:</Label>
                <FieldFlex $w={461} $h={56} $ls={-0.1}>
                  <FieldText>Об оказании содействия в финансовом обеспечении налоговых органов.</FieldText>
                  <ScrollCol>
                    <Raised $w={14} $h={14}><Tri $dir="up" $s={3} $c={tan} /></Raised>
                    <Raised $w={14} $h={14}><Tri $dir="down" $s={3} $c={tan} /></Raised>
                  </ScrollCol>
                </FieldFlex>
              </Row>
              <Row $mt={8} $pl={1}>
                <Tri $s={4} $mr={3} />
                <Label $w={44} $mr={10}>Рубр.(0):</Label>
                <Field $w={194} $bg="#e9e6dd" />
                <Tri $s={4} $ml={7} $mr={3} />
                <Label $w={52} $mr={10}>Связки(0):</Label>
                <Field $w={186} $bg="#e9e6dd" />
              </Row>
              <Row $mt={13} $pl={1} $align="flex-start">
                <Label $w={55} $mr={9}>Прим.:</Label>
                <FieldFlex $w={461} $h={37}>
                  <FieldText>В дело М.С.Козлов</FieldText>
                  <ScrollCol>
                    <Raised $w={14} $h={14}><Tri $dir="up" $s={3} $c={tan} /></Raised>
                    <Raised $w={14} $h={14}><Tri $dir="down" $s={3} $c={tan} /></Raised>
                  </ScrollCol>
                </FieldFlex>
              </Row>
            </LeftCol>

            <RightCol>
              <Panel>
                <Row>
                  <Label $w={53} $mr={4}>Состав:</Label>
                  <Field $w={90} />
                </Row>
                <Row $mt={7}>
                  <Label $w={53} $mr={4}>Доставка:</Label>
                  <FieldFlex $w={90}>
                    <FieldText>Почта</FieldText>
                    <SelectBtn $w={13} $h={18}><Tri $dir="down" $s={3} /></SelectBtn>
                  </FieldFlex>
                </Row>
                <Row $mt={10}>
                  <Label $w={54} $mr={4}>Почт. №:</Label>
                  <Field $w={89} />
                </Row>
                <LinkRow $mt={6}><IDocList />Сопр.документ (0)</LinkRow>
                <LinkRow><IPeople />Адресаты (0)</LinkRow>
                <LinkRow $c="#800000"><IScroll />Журнал передачи</LinkRow>
              </Panel>
              <Group $m="2px 0 0" $p="0" $w={157}>
                <Legend $ml={7} $pr={8}><Tri $s={4} $mr={5} />Файлы</Legend>
                <FileTools>
                  <ToolCell $w={23}><IFNew /></ToolCell>
                  <ToolCell><IFPrint /></ToolCell>
                  <ToolCell $w={21}><IFView /></ToolCell>
                  <ToolCell><IFEdit /></ToolCell>
                  <ToolCell><IFClip /></ToolCell>
                  <ToolCell $w={20}><IFBinEdit /></ToolCell>
                  <ToolCell $w={18}><IFBinView /></ToolCell>
                </FileTools>
                <Field $w={145} $h={58} $ml={5} />
              </Group>
            </RightCol>
          </Columns>

          <Group $m="6px 0 0 12px" $p="5px 0 8px" $w={718}>
            <Legend $pr={54}><Tri $s={4} $mr={4} />Резолюция (1 из 2)</Legend>
            <LegendNav>
              <Tri $dir="left" $s={5} $c="#808080" />
              <Tri $dir="right" $s={5} />
            </LegendNav>
            <Row>
              <Label $w={54} $mr={8}>Автор:</Label>
              <Field $w={237} $bg="#e9e6dd"><Tinted $inline>Степанов А.Н.</Tinted></Field>
              <Slot $w={22}><IInfo /></Slot>
              <DateText $w={19} $ml={7}>от</DateText>
              <DateText $w={64}>04/07/2005</DateText>
              <Label $w={40} $mr={8}>План:</Label>
              <DateText $w={63}>04/08/2005</DateText>
              <Label $w={36} $mr={8}>Факт:</Label>
              <DateText $w={64}>04/08/2005</DateText>
              <KBtn $ml={12}>К</KBtn>
            </Row>
            <Row $mt={6} $align="flex-start">
              <Label $w={54} $mr={9} $pt={3}>Текст:</Label>
              <Field $w={308} $h={75} $bg="#e9e6dd"><Tinted /></Field>
              <Field $w={283} $h={75} $ml={7} $bg="#e9e6dd"><Bang>!</Bang>Козлов М.С.</Field>
              <ResGrid>
                <IRNew />
                <IRNewPr />
                <IRInfo />
                <IREdit />
                <IRSend />
                <IRSendEdit />
              </ResGrid>
            </Row>
          </Group>

          <Row $mt={9} $pl={13}>
            <ICards />
            <Tri $s={5} $ml={3} $mr={7} />
            <Field $w={338} $h={18} $fs={11} $bg={bg}>&nbsp;Центральная картотека</Field>
            <Field $w={339} $h={18} $ml={6} $fs={11} $bg={bg}>&nbsp;Кабинет главы администрации края</Field>
          </Row>
        </Body>
      </Dialog>
    </Desktop>
  );
}
